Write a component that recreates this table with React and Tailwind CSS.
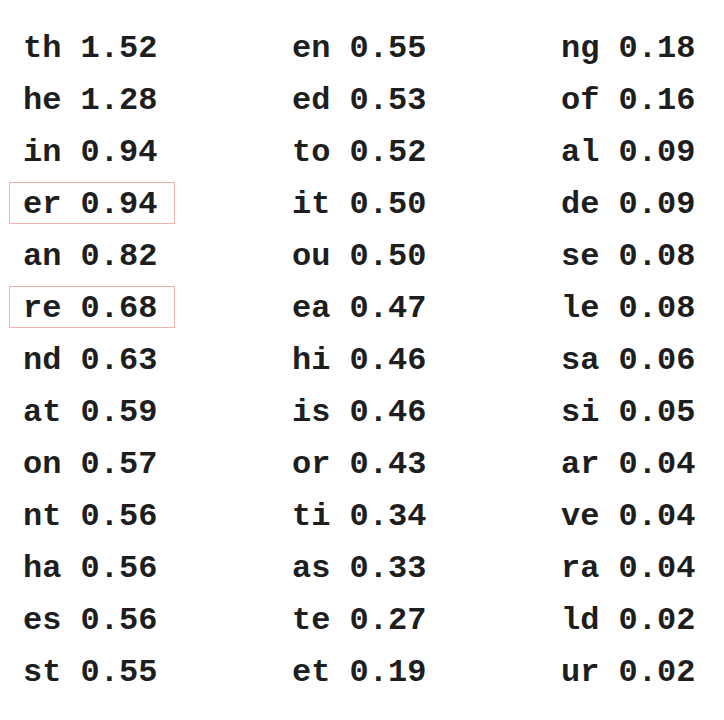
const cols = [
  [["th","1.52"],["he","1.28"],["in","0.94"],["er","0.94"],["an","0.82"],["re","0.68"],["nd","0.63"],["at","0.59"],["on","0.57"],["nt","0.56"],["ha","0.56"],["es","0.56"],["st","0.55"]],
  [["en","0.55"],["ed","0.53"],["to","0.52"],["it","0.50"],["ou","0.50"],["ea","0.47"],["hi","0.46"],["is","0.46"],["or","0.43"],["ti","0.34"],["as","0.33"],["te","0.27"],["et","0.19"]],
  [["ng","0.18"],["of","0.16"],["al","0.09"],["de","0.09"],["se","0.08"],["le","0.08"],["sa","0.06"],["si","0.05"],["ar","0.04"],["ve","0.04"],["ra","0.04"],["ld","0.02"],["ur","0.02"]],
];

export default function App() {
  return (
    <div className="w-[724px] h-[720px] overflow-hidden bg-white pt-[21px] pl-[23px] flex text-[#1e1e1e] text-[32px] font-bold" style={{ fontFamily: '"Liberation Mono", "Courier New", monospace' }}>
      {cols.map((col, ci) => (
        <div key={ci} className="w-[269px] shrink-0 flex flex-col">
          {col.map(([b, v], ri) => {
            const hl = ci === 0 && (b === "er" || b === "re");
            return (
              <div key={ri} className="h-[52px] flex items-center whitespace-pre">
                {hl ? (
                  <div className="-ml-[14px] pl-[13px] w-[166px] h-[42px] border border-[#ebb3ac] flex items-center">
                    <span className="pt-[4px]">{b + " " + v}</span>
                  </div>
                ) : (
                  <span className="pt-[4px]">{b + " " + v}</span>
                )}
              </div>
            );
          })}
        </div>
      ))}
    </div>
  );
}
